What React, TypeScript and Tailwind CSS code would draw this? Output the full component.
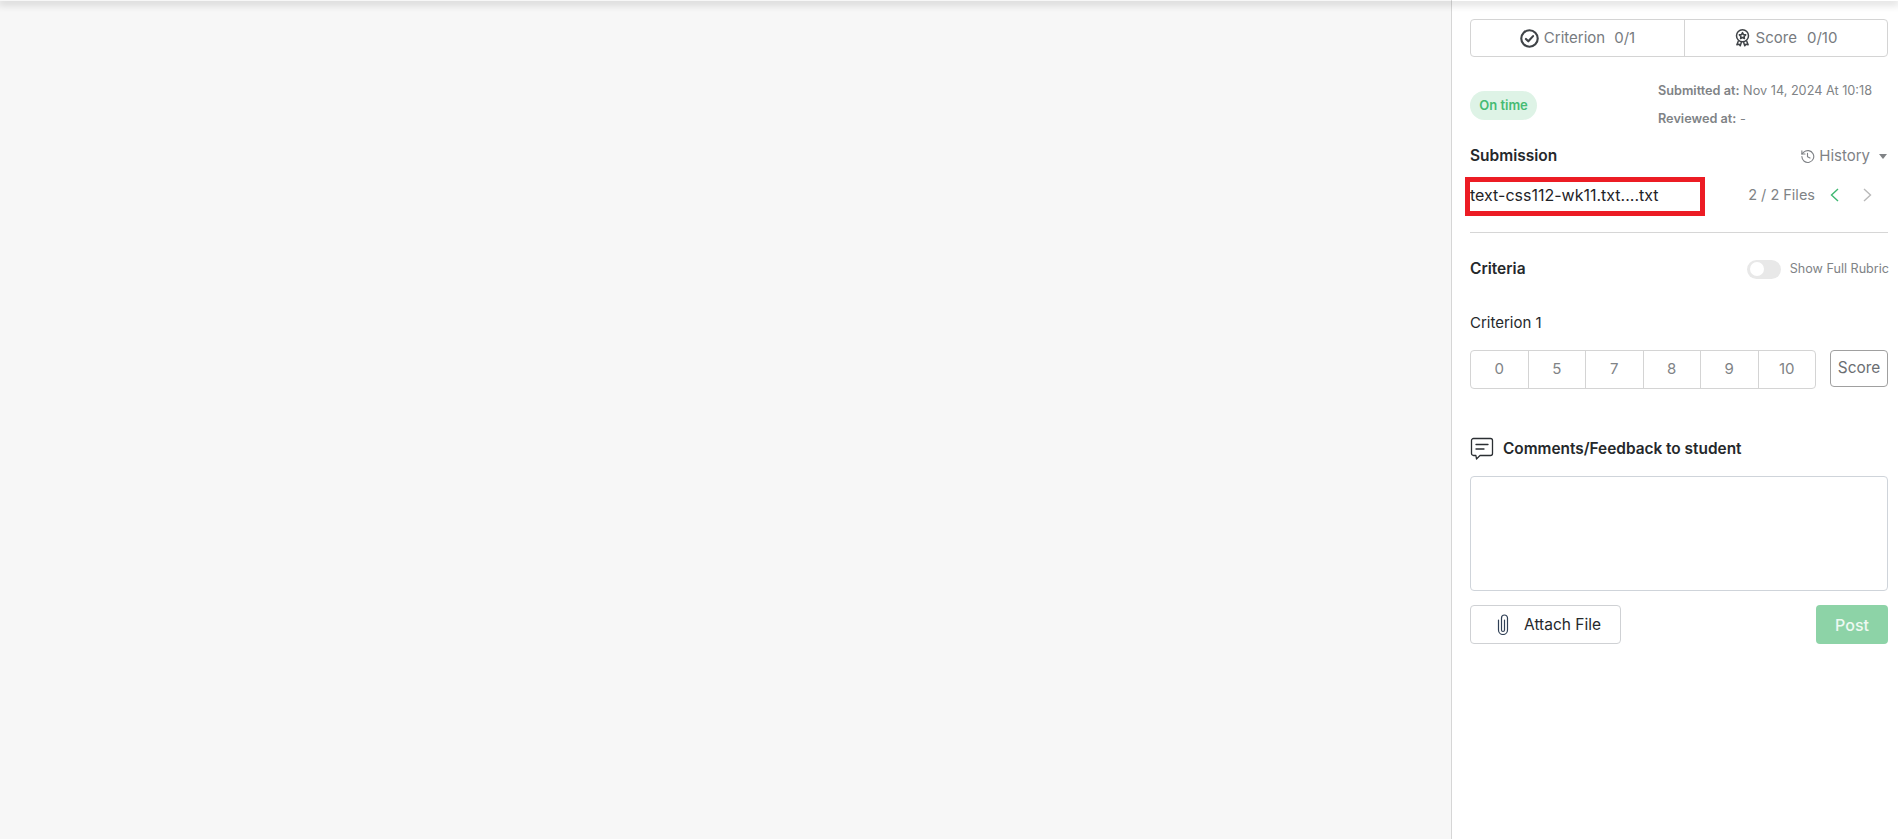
const scores = ["0", "5", "7", "8", "9", "10"];

function CheckIcon() {
  return (
    <svg width="19" height="19" viewBox="0 0 24 24" fill="none" stroke="#3f4347" strokeWidth="2.7" strokeLinecap="round" strokeLinejoin="round">
      <circle cx="12" cy="12" r="10.4" />
      <path d="M7.500 12.500l3 3 6-6.500" />
    </svg>
  );
}

function BadgeIcon() {
  return (
    <svg width="15" height="18" viewBox="0 0 20 24" fill="none" stroke="#3f4347" strokeWidth="2" strokeLinejoin="round">
      <circle cx="10" cy="9" r="8" />
      <path d="M10 4.800l1.300 2.600 2.900.4-2.100 2 .5 2.900-2.600-1.400-2.600 1.400.5-2.900-2.100-2 2.900-.4z" />
      <path d="M4.500 16l-2 5 3-.6 1.500 2 1.600-5M15.500 16l2 5-3-.6-1.500 2-1.600-5" />
    </svg>
  );
}

function CommentIcon() {
  return (
    <svg width="24" height="24" viewBox="0 0 24 24" fill="none" stroke="#2b2f33" strokeWidth="1.3" strokeLinecap="round" strokeLinejoin="round">
      <path d="M3.500 1.500h17a2 2 0 0 1 2 2v13a2 2 0 0 1-2 2H10l-3.500 3.500-.6-3.500H3.500a2 2 0 0 1-2-2v-13a2 2 0 0 1 2-2z" />
      <path d="M6 7.500h12M6 12h8" />
    </svg>
  );
}

function ClipIcon() {
  return (
    <svg width="12" height="21" viewBox="0 0 12 21" fill="none" stroke="#2f3f55" strokeWidth="1.2" strokeLinecap="round">
      <path d="M1.500 6v10a4.500 4.500 0 0 0 9 0V4a3 3 0 0 0-6 0v12a1.500 1.500 0 0 0 3 0V6" />
    </svg>
  );
}

function HistoryIcon() {
  return (
    <svg width="15" height="15" viewBox="0 0 24 24" fill="none" stroke="#7f8286" strokeWidth="1.8" strokeLinecap="round" strokeLinejoin="round">
      <path d="M3 12a9.500 9.500 0 1 0 3-6.900L3 8" />
      <path d="M3 3v5h5" />
      <path d="M12 7v5.500l4 2" />
    </svg>
  );
}

function Chevron({ left }: { left?: boolean }) {
  return (
    <svg width="9" height="14" viewBox="0 0 9 14" fill="none" stroke={left ? "#3fb871" : "#b9b9b9"} strokeWidth="1.4">
      <path d={left ? "M8 1L1.500 7 8 13" : "M1 1l6.500 6L1 13"} />
    </svg>
  );
}

export default function App() {
  return (
    <div className="relative flex h-[839px] w-full overflow-hidden bg-white font-['Inter',sans-serif]">
      <div className="absolute inset-x-0 top-0 h-px shadow-[0_1px_8px_2px_rgba(0,0,0,0.2)]" />
      <div className="flex-1 bg-[#f7f7f7]" />
      <aside className="flex w-[447px] flex-col border-l border-l-[#d6d6d6] bg-white pl-[18px] pr-[10px] pt-[19px]">
        <div className="flex h-[38px] rounded border border-[#d4d4d4] text-[15px] text-[#777b80]">
          <div className="flex w-[214px] items-center justify-center gap-[5px] border-r border-r-[#d4d4d4]">
            <CheckIcon />
            <span>Criterion</span>
            <span className="ml-[4px]">0/1</span>
          </div>
          <div className="flex flex-1 items-center justify-center gap-[6px]">
            <BadgeIcon />
            <span>Score</span>
            <span className="ml-[4px]">0/10</span>
          </div>
        </div>

        <div className="mt-[24px] flex h-[50px] items-start justify-between">
          <span className="mt-[10px] flex h-[29px] w-[67px] items-center justify-center rounded-full bg-[#def3e6] text-[13px] font-semibold text-[#46bb73]">
            On time
          </span>
          <div className="mr-[15px] w-[215px] whitespace-nowrap text-[12.7px] leading-[28px] text-[#808386]">
            <p className="-mt-[4px]"><b className="font-semibold">Submitted at:</b> Nov 14, 2024 At 10:18</p>
            <p><b className="font-semibold">Reviewed at:</b> -</p>
          </div>
        </div>

        <div className="mt-[15px] flex h-[20px] items-center justify-between">
          <h2 className="text-[15.5px] font-semibold text-[#25282b]">Submission</h2>
          <div className="flex items-center text-[15px] text-[#7f8286]">
            <HistoryIcon />
            <span className="ml-[4px]">History</span>
            <span className="ml-[9px] mr-[1px] h-0 w-0 border-x-[4.500px] border-t-[5px] border-x-transparent border-t-[#808386]" />
          </div>
        </div>

        <div className="relative mt-[19px] flex h-[20px] items-center justify-between">
          <span className="text-[16px] text-[#1f2327]">text-css112-wk11.txt....txt</span>
          <div className="absolute left-[-5px] top-[-8px] h-[39px] w-[240px] border-[5px] border-[#ec1c24]" />
          <div className="flex items-center text-[14.5px] text-[#808386]">
            <span>2 / 2 Files</span>
            <span className="ml-[15px]"><Chevron left /></span>
            <span className="ml-[24px] mr-[16px]"><Chevron /></span>
          </div>
        </div>

        <hr className="mt-[27px] border-t border-t-[#d6d6d6]" />

        <div className="mt-[26px] flex h-[20px] items-center justify-between">
          <h2 className="text-[15.5px] font-semibold text-[#25282b]">Criteria</h2>
          <div className="-mr-[1px] flex items-center gap-[9px]">
            <span className="flex h-[19px] w-[34px] items-center rounded-full bg-[#e8e8e8] pl-[3px]">
              <span className="h-[14px] w-[14px] rounded-full bg-white" />
            </span>
            <span className="text-[12.6px] text-[#808386]">Show Full Rubric</span>
          </div>
        </div>

        <p className="mt-[34px] h-[20px] text-[15px] leading-[20px] text-[#25282b]">Criterion 1</p>

        <div className="mt-[17px] flex items-start justify-between">
          <div className="flex h-[39px] w-[346px] rounded border border-[#d4d4d4] text-[15px] text-[#808386]">
            {scores.map((s) => (
              <div key={s} className="flex flex-1 items-center justify-center border-r border-r-[#d4d4d4] last:border-r-0">
                {s}
              </div>
            ))}
          </div>
          <button className="h-[37px] w-[58px] rounded border border-[#a0a0a0] pb-px text-[15.4px] text-[#6b6e72]">Score</button>
        </div>

        <div className="mt-[48px] flex h-[24px] items-center gap-[9px]">
          <CommentIcon />
          <h2 className="text-[15.4px] font-semibold text-[#25282b]">Comments/Feedback to student</h2>
        </div>

        <textarea className="mt-[15px] h-[115px] w-full resize-none rounded border border-[#cfd4da] bg-white" />

        <div className="mt-[14px] flex justify-between">
          <button className="flex h-[39px] w-[151px] items-center rounded border border-[#cfd1d4] pl-[26px] text-[15.5px] text-[#25282b]">
            <ClipIcon />
            <span className="ml-[15px]">Attach File</span>
          </button>
          <button className="h-[39px] w-[72px] rounded bg-[#8dd3a7] text-[16px] font-medium text-[#eef9f2]">Post</button>
        </div>
      </aside>
    </div>
  );
}
